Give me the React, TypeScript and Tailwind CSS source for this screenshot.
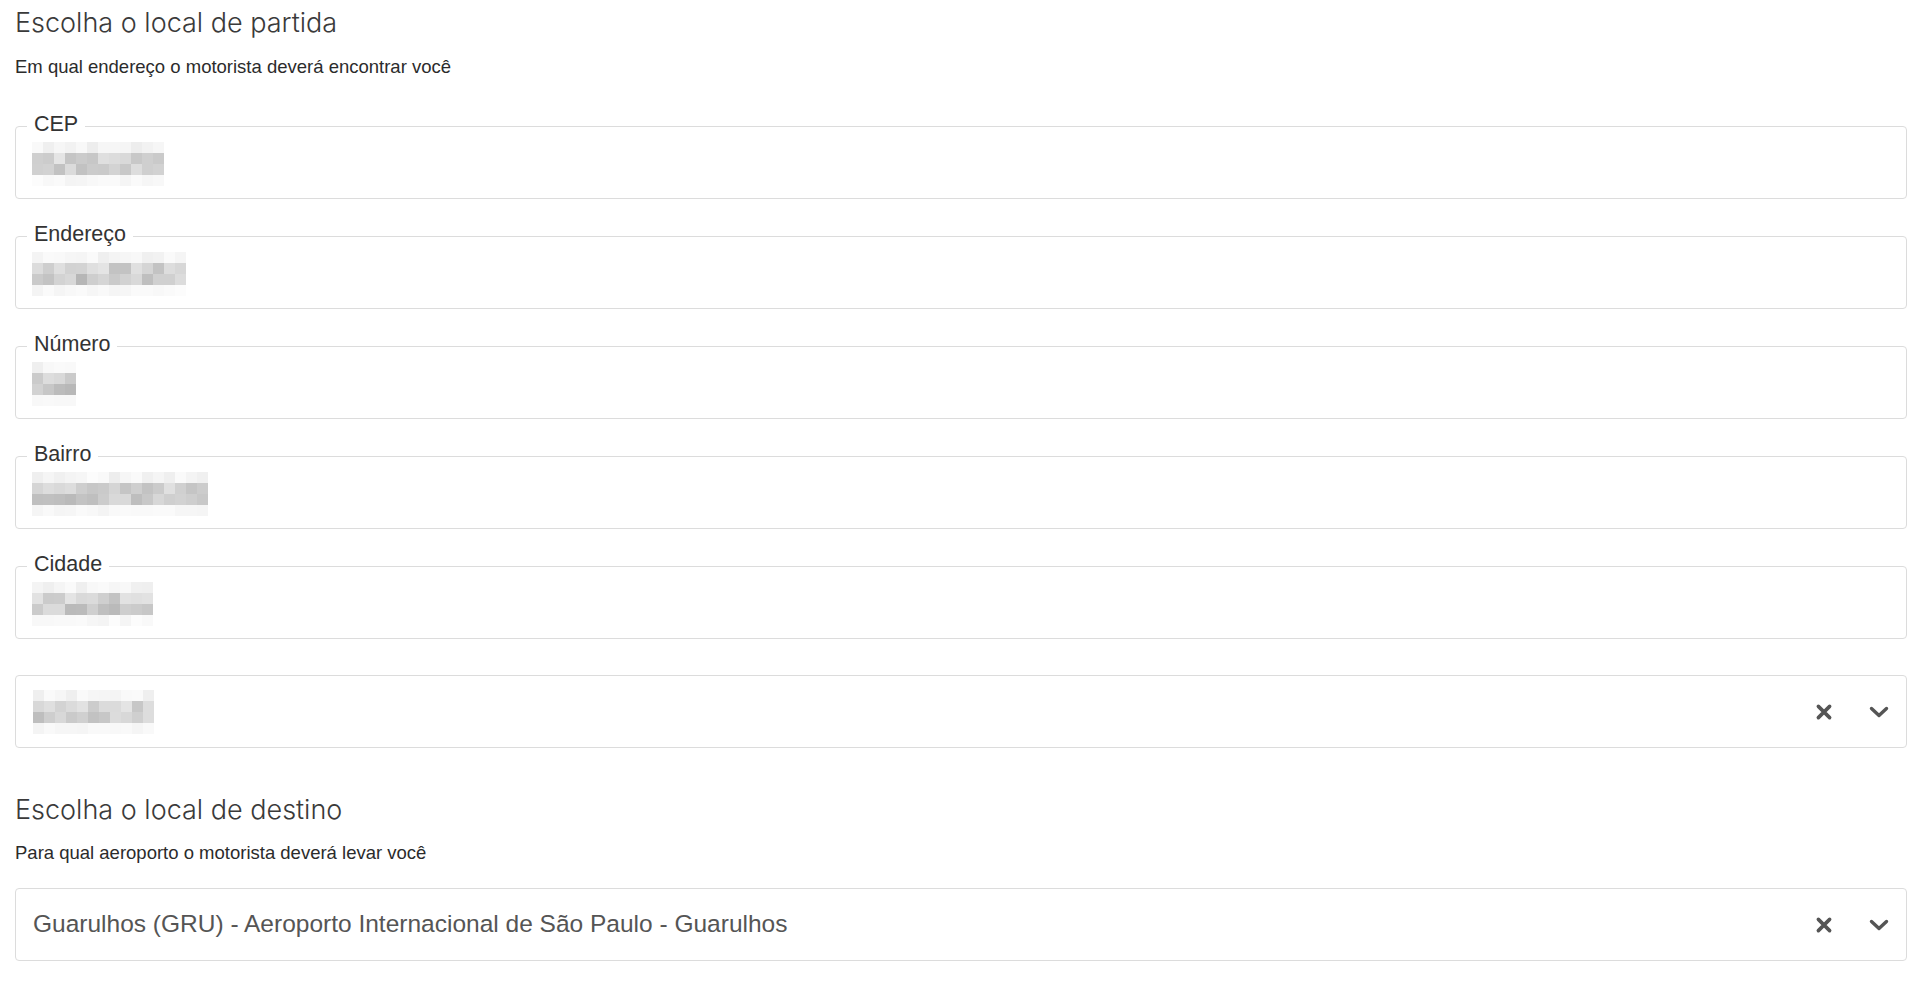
import React from "react";

const fields = [
  { label: "CEP", width: 128, seed: 3 },
  { label: "Endereço", width: 154, seed: 7 },
  { label: "Número", width: 44, seed: 11 },
  { label: "Bairro", width: 174, seed: 5 },
  { label: "Cidade", width: 119, seed: 13 },
];

// censored value: a little mosaic of grey squares
function Pixelated({ width, seed }: { width: number; seed: number }) {
  const cols = Math.ceil(width / 11);
  const rowRange = [
    [0.02, 0.12],
    [0.18, 0.42],
    [0.22, 0.5],
    [0.02, 0.08],
  ];
  let s = seed * 9301 + 49297;
  const rand = () => {
    s = (s * 9301 + 49297) % 233280;
    return s / 233280;
  };
  return (
    <div className="flex flex-col" style={{ width }}>
      {rowRange.map(([lo, hi], r) => (
        <div key={r} className="flex h-[11px]">
          {Array.from({ length: cols }).map((_, c) => (
            <div
              key={c}
              className="h-[11px] w-[11px] shrink-0"
              style={{ backgroundColor: `rgba(110,110,110,${(lo + rand() * (hi - lo)).toFixed(2)})` }}
            />
          ))}
        </div>
      ))}
    </div>
  );
}

function ClearIcon() {
  return (
    <svg width="18" height="18" viewBox="0 0 16 16" className="text-[#555]">
      <path d="M3 3 13 13M13 3 3 13" stroke="currentColor" strokeWidth="3.2" strokeLinecap="round" fill="none" />
    </svg>
  );
}

function ChevronIcon() {
  return (
    <svg width="20" height="12" viewBox="0 0 20 12" className="text-[#555]">
      <path d="M2.5 2.5 10 9.5 17.5 2.5" stroke="currentColor" strokeWidth="3.4" strokeLinecap="round" strokeLinejoin="round" fill="none" />
    </svg>
  );
}

function SelectBox({ children }: { children: React.ReactNode }) {
  return (
    <div className="flex h-[73px] items-center rounded-[4px] border border-[#dcdcdc] bg-white pl-[17px] pr-[17px]">
      <div className="flex-1 min-w-0">{children}</div>
      <div className="flex items-center gap-[36px]">
        <ClearIcon />
        <ChevronIcon />
      </div>
    </div>
  );
}

export default function App() {
  return (
    <div className="min-h-screen bg-white pl-[15px] pr-[13px] text-[#333] font-['Liberation_Sans',Arial,sans-serif]">
      <h2 className="pt-[8px] text-[27px] leading-[30px] font-light text-[#3a3a3a] font-['Inter',sans-serif]">
        Escolha o local de partida
      </h2>
      <p className="mt-[19px] text-[18.5px] leading-[20px] text-[#2b2b2b]">
        Em qual endereço o motorista deverá encontrar você
      </p>

      <div className="mt-[37px] flex flex-col gap-[25px]">
        {fields.map((f) => (
          <fieldset key={f.label} className="rounded-[4px] border border-[#dcdcdc]">
            <legend className="ml-[11px] h-[25px] px-[7px] pb-[4px] text-[21.5px] leading-[21px] text-[#333]">
              {f.label}
            </legend>
            <div className="h-[59px] pl-[16px] pt-[3px]">
              <Pixelated width={f.width} seed={f.seed} />
            </div>
          </fieldset>
        ))}
      </div>

      <div className="mt-[36px]">
        <SelectBox>
          <Pixelated width={120} seed={17} />
        </SelectBox>
      </div>

      <h2 className="mt-[47px] text-[27px] leading-[30px] font-light text-[#3a3a3a] font-['Inter',sans-serif]">
        Escolha o local de destino
      </h2>
      <p className="mt-[18px] text-[18.5px] leading-[20px] text-[#2b2b2b]">
        Para qual aeroporto o motorista deverá levar você
      </p>

      <div className="mt-[25px]">
        <SelectBox>
          <span className="text-[24.5px] text-[#555]">
            Guarulhos (GRU) - Aeroporto Internacional de São Paulo - Guarulhos
          </span>
        </SelectBox>
      </div>
    </div>
  );
}
